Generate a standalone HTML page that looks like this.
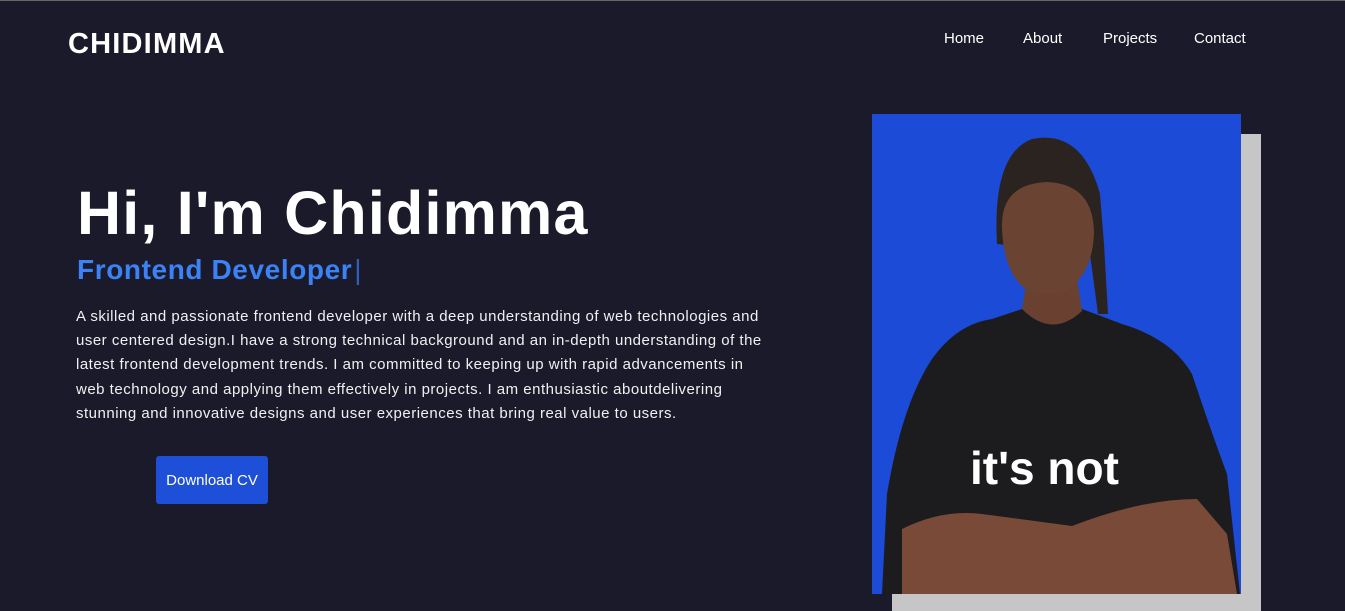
<!DOCTYPE html>
<html><head><style>
*{margin:0;padding:0;box-sizing:border-box}
html,body{width:1345px;height:611px;overflow:hidden}
body{background:#1b1a2b;font-family:"Liberation Sans",sans-serif;color:#fff;position:relative;border-top:1px solid #666}
.logo{position:absolute;left:68px;top:27px;font-size:29px;font-weight:bold;letter-spacing:1.2px}
.nav{position:absolute;top:29px;font-size:15px}
h1{position:absolute;left:77px;top:177px;font-size:61px;font-weight:bold;letter-spacing:1.2px}
h2{position:absolute;left:77px;top:253px;font-size:28px;font-weight:bold;color:#3b82f6;letter-spacing:0.6px}
h2 span{color:#2f5fb8;font-weight:normal;margin-left:2px}
p{position:absolute;left:76px;top:304px;font-size:15px;line-height:24.2px;color:#f0f0f0;white-space:nowrap;letter-spacing:0.5px}
.btn{position:absolute;left:156px;top:455px;width:112px;height:48px;background:#1d4fd8;border-radius:3px;font-size:15px;display:flex;align-items:center;justify-content:center}
.gray{position:absolute;left:892px;top:133px;width:369px;height:478px;background:#c6c6c6}
.blue{position:absolute;left:872px;top:113px;width:369px;height:480px;background:#1c4bd8;overflow:hidden}
</style></head><body>
<div class="logo">CHIDIMMA</div>
<div class="nav" style="left:944px">Home</div>
<div class="nav" style="left:1023px">About</div>
<div class="nav" style="left:1103px">Projects</div>
<div class="nav" style="left:1194px">Contact</div>
<h1>Hi, I'm Chidimma</h1>
<h2>Frontend Developer<span>|</span></h2>
<p>A skilled and passionate frontend developer with a deep understanding of web technologies and<br>user centered design.I have a strong technical background and an in-depth understanding of the<br>latest frontend development trends. I am committed to keeping up with rapid advancements in<br>web technology and applying them effectively in projects. I am enthusiastic aboutdelivering<br>stunning and innovative designs and user experiences that bring real value to users.</p>
<div class="btn">Download CV</div>
<div class="gray"></div>
<div class="blue">
<svg width="369" height="480" viewBox="0 0 369 480">
<path d="M10 480 L15 380 Q30 290 60 245 Q85 210 120 205 L150 195 L210 195 L250 210 Q300 225 320 260 Q340 320 355 360 L368 480 Z" fill="#1c1c1e"/>
<path d="M150 195 Q180 225 210 197 L205 165 L155 165 Z" fill="#6a4030"/>
<path d="M125 130 Q120 40 160 25 Q210 15 228 80 L232 130 L236 200 L226 200 L218 140 Z" fill="#2a2320"/>
<path d="M130 115 Q128 70 175 68 Q222 70 222 120 Q220 160 195 176 Q175 186 155 176 Q132 160 130 115Z" fill="#6b4332"/>
<path d="M30 415 Q70 395 110 400 L200 412 Q270 385 325 385 L355 420 L365 480 L30 480 Z" fill="#7a4a38"/>
<text x="98" y="370" font-family="Liberation Sans" font-weight="bold" font-size="46" fill="#fff">it's not</text>
</svg>
</div>
</body></html>
